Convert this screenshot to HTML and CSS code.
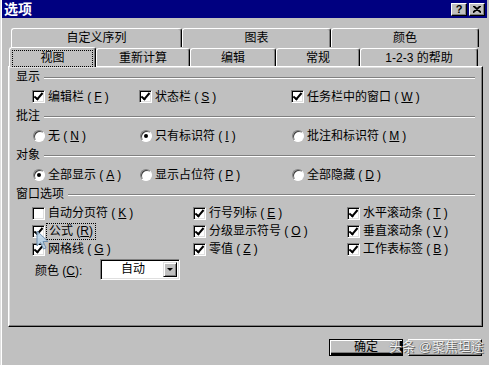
FILE: index.html
```html
<!DOCTYPE html>
<html lang="zh-CN">
<head>
    <meta charset="UTF-8">
    <title>选项</title>
    <link rel="stylesheet" href="styles.css">
</head>
<body>
<div class="window">
    <div class="titlebar">
        <span class="title">选项</span>
        <div class="tb-btns">
            <span class="tb-btn help">?</span>
            <span class="tb-btn">
                <svg width="8" height="7" viewBox="0 0 8 7"><path d="M0 0 L8 7 M1 0 L8 6 M8 0 L0 7 M7 0 L0 6" stroke="#000" stroke-width="1.2"/></svg>
            </span>
        </div>
    </div>

    <div class="tabrow back">
        <div class="tab w171">自定义序列</div>
        <div class="tab w149">图表</div>
        <div class="tab w148">颜色</div>
    </div>
    <div class="tabrow front">
        <div class="tab active"><span class="focus">视图</span></div>
        <div class="tab w94">重新计算</div>
        <div class="tab w86">编辑</div>
        <div class="tab w84">常规</div>
        <div class="tab w118">1-2-3 的帮助</div>
    </div>

    <div class="panel">
        <div class="group-title">显示</div>
        <div class="row cols-a">
            <label class="opt"><span class="box checked"></span>编辑栏 (<u>F</u>)</label>
            <label class="opt"><span class="box checked"></span>状态栏 (<u>S</u>)</label>
            <label class="opt"><span class="box checked"></span>任务栏中的窗口 (<u>W</u>)</label>
        </div>

        <div class="group-title">批注</div>
        <div class="row cols-a">
            <label class="opt"><span class="radio"></span>无 (<u>N</u>)</label>
            <label class="opt"><span class="radio on"></span>只有标识符 (<u>I</u>)</label>
            <label class="opt"><span class="radio"></span>批注和标识符 (<u>M</u>)</label>
        </div>

        <div class="group-title">对象</div>
        <div class="row cols-a">
            <label class="opt"><span class="radio on"></span>全部显示 (<u>A</u>)</label>
            <label class="opt"><span class="radio"></span>显示占位符 (<u>P</u>)</label>
            <label class="opt"><span class="radio"></span>全部隐藏 (<u>D</u>)</label>
        </div>

        <div class="group-title">窗口选项</div>
        <div class="grid cols-b">
            <label class="opt"><span class="box"></span>自动分页符 (<u>K</u>)</label>
            <label class="opt"><span class="box checked"></span>行号列标 (<u>E</u>)</label>
            <label class="opt"><span class="box checked"></span>水平滚动条 (<u>T</u>)</label>

            <label class="opt"><span class="box checked"></span><span class="focus-text">公式 (<u>R</u>)</span></label>
            <label class="opt"><span class="box checked"></span>分级显示符号 (<u>O</u>)</label>
            <label class="opt"><span class="box checked"></span>垂直滚动条 (<u>V</u>)</label>

            <label class="opt"><span class="box checked"></span>网格线 (<u>G</u>)</label>
            <label class="opt"><span class="box checked"></span>零值 (<u>Z</u>)</label>
            <label class="opt"><span class="box checked"></span>工作表标签 (<u>B</u>)</label>
        </div>

        <div class="color-row">
            <span class="color-label">颜色 (<u>C</u>):</span>
            <div class="combo">
                <span class="combo-text">自动</span>
                <span class="combo-btn"><span class="arrow"></span></span>
            </div>
        </div>
    </div>

    <div class="buttons">
        <div class="btn default">确定</div>
        <div class="btn"></div>
    </div>

    <div class="watermark">头条 @聚焦坦途</div>

    <svg class="cursor" width="14" height="21" viewBox="0 0 14 21">
        <path d="M1 1 L1 16 L4.5 12.5 L7.5 19 L10 18 L7 11.5 L12 11.5 Z" fill="#b8d4ea" fill-opacity="0.85" stroke="#6f8fae" stroke-width="1"/>
    </svg>
</div>
</body>
</html>
```

FILE: styles.css
```css
body {
    margin: 0;
    padding: 0;
    background: #c0c0c0;
    font-family: "Liberation Sans", "Noto Sans CJK SC", sans-serif;
    font-size: 12px;
    color: #000;
}
u {
    text-decoration: underline;
    text-underline-offset: 1px;
}
.window {
    position: relative;
    width: 489px;
    height: 365px;
    box-sizing: border-box;
    border-left: 1px solid #dfdfdf;
    box-shadow: inset 1px 0 #fff;
    overflow: hidden;
}
.titlebar {
    height: 18px;
    margin-left: 1px;
    margin-right: 2px;
    background: #000080;
    display: flex;
    align-items: center;
    justify-content: space-between;
}
.title {
    color: #fff;
    font-weight: bold;
    font-size: 14px;
    line-height: 18px;
    padding-left: 2px;
}
.tb-btns {
    display: flex;
    gap: 2px;
    padding-right: 2px;
}
.tb-btn {
    width: 16px;
    height: 13px;
    box-sizing: border-box;
    background: #c0c0c0;
    border: 1px solid;
    border-color: #fff #000 #000 #fff;
    box-shadow: inset -1px -1px #808080;
    display: flex;
    align-items: center;
    justify-content: center;
}
.tb-btn.help {
    font-weight: bold;
    font-size: 11px;
    line-height: 11px;
}

/* tabs */
.tabrow {
    display: flex;
}
.tabrow.back {
    margin-top: 10px;
    padding-left: 10px;
}
.tabrow.front {
    padding-left: 8px;
    align-items: flex-end;
}
.tab {
    height: 19px;
    box-sizing: border-box;
    border-top: 1px solid #fff;
    border-left: 1px solid #fff;
    border-right: 1px solid #000;
    box-shadow: inset -1px 0 #808080;
    border-radius: 3px 3px 0 0;
    text-align: center;
    line-height: 18px;
    background: #c0c0c0;
}
.tabrow.front .tab {
    height: 18px;
}
.w171 { width: 171px; }
.w149 { width: 149px; }
.w148 { width: 148px; }
.w94 { width: 94px; }
.w86 { width: 86px; }
.w84 { width: 84px; }
.w118 { width: 118px; }
.tabrow.front .tab.active {
    width: 87px;
    height: 20px;
    padding: 2px 2px 0 2px;
    position: relative;
    z-index: 2;
    margin-bottom: -1px;
}
.focus {
    display: block;
    height: 17px;
    box-sizing: border-box;
    border: 1px dotted #000;
    line-height: 15px;
}

/* panel */
.panel {
    margin: 0 6px 0 7px;
    height: 261px;
    box-sizing: border-box;
    border-top: 1px solid #fff;
    border-left: 1px solid #fff;
    border-right: 1px solid #000;
    border-bottom: 1px solid #000;
    box-shadow: inset -1px -1px #808080, inset 1px 1px #dfdfdf;
    padding: 0 0 0 7px;
}
.group-title {
    display: flex;
    align-items: center;
    height: 20px;
    line-height: 16px;
}
.group-title::after {
    content: "";
    flex: 1;
    height: 0;
    border-top: 1px solid #808080;
    border-bottom: 1px solid #fff;
    margin: 1px 7px 0 4px;
}
.row {
    display: grid;
    height: 19px;
    align-items: center;
    padding-left: 16px;
}
.cols-a {
    grid-template-columns: 107px 152px 1fr;
}
.grid {
    display: grid;
    grid-auto-rows: 18px;
    align-items: center;
    padding-left: 16px;
}
.cols-b {
    grid-template-columns: 161px 154px 1fr;
}
.opt {
    display: flex;
    align-items: center;
    gap: 3px;
    line-height: 16px;
    white-space: nowrap;
}
.box {
    width: 13px;
    height: 13px;
    box-sizing: border-box;
    background: #fff;
    border: 1px solid;
    border-color: #808080 #fff #fff #808080;
    box-shadow: inset 1px 1px #000, inset -1px -1px #dfdfdf;
    position: relative;
    flex: none;
}
.box.checked::after {
    content: "";
    position: absolute;
    left: 3px;
    top: 0;
    width: 3px;
    height: 7px;
    border: solid #000;
    border-width: 0 2px 2px 0;
    transform: rotate(40deg);
}
.radio {
    width: 12px;
    height: 12px;
    box-sizing: border-box;
    border-radius: 50%;
    background: #fff;
    border: 1px solid;
    border-color: #808080 #fff #fff #808080;
    box-shadow: inset 1px 1px #404040;
    margin-left: 1px;
    position: relative;
    flex: none;
}
.radio.on::after {
    content: "";
    position: absolute;
    left: 3px;
    top: 3px;
    width: 4px;
    height: 4px;
    border-radius: 50%;
    background: #000;
}
.focus-text {
    border: 1px dotted #000;
    padding: 0 2px;
    line-height: 15px;
    margin-left: -2px;
}
.color-row {
    display: flex;
    align-items: center;
    height: 22px;
    padding-left: 19px;
}
.color-label {
    width: 65px;
}
.combo {
    width: 80px;
    height: 21px;
    box-sizing: border-box;
    background: #fff;
    border: 1px solid;
    border-color: #808080 #fff #fff #808080;
    box-shadow: inset 1px 1px #000, inset -1px -1px #dfdfdf;
    display: flex;
    align-items: center;
    padding: 2px;
}
.combo-text {
    flex: 1;
    text-align: center;
    line-height: 15px;
}
.combo-btn {
    width: 14px;
    height: 15px;
    box-sizing: border-box;
    background: #c0c0c0;
    border: 1px solid;
    border-color: #dfdfdf #000 #000 #dfdfdf;
    box-shadow: inset 1px 1px #fff, inset -1px -1px #808080;
    display: flex;
    align-items: center;
    justify-content: center;
}
.arrow {
    width: 0;
    height: 0;
    border-left: 3px solid transparent;
    border-right: 3px solid transparent;
    border-top: 3px solid #000;
}

/* bottom buttons */
.buttons {
    display: flex;
    justify-content: flex-end;
    gap: 5px;
    margin-top: 12px;
    padding-right: 7px;
}
.btn {
    width: 74px;
    height: 17px;
    box-sizing: border-box;
    border: 1px solid;
    border-color: #fff #000 #000 #fff;
    box-shadow: inset -1px -1px #808080;
    text-align: center;
    line-height: 15px;
}
.btn.default {
    border: 1px solid #000;
    box-shadow: inset 1px 1px #fff, inset -2px -2px #000, inset -3px -3px #808080;
}
.watermark {
    position: absolute;
    left: 388px;
    top: 338px;
    font-size: 13px;
    line-height: 18px;
    color: #f2f2f2;
    text-shadow: 0 0 1px #555, 1px 1px 0 #666;
}
.cursor {
    position: absolute;
    left: 35px;
    top: 230px;
}
```
